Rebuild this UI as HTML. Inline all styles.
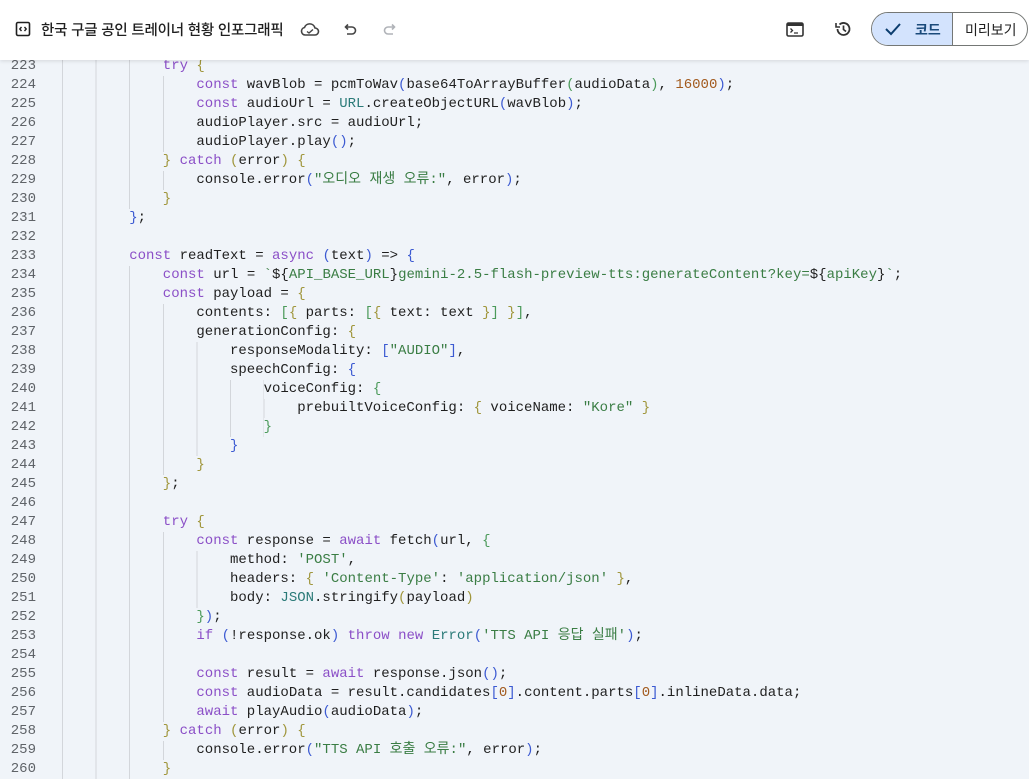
<!DOCTYPE html>
<html><head><meta charset="utf-8"><style>
*{margin:0;padding:0;box-sizing:border-box}
body{width:1029px;height:767px;overflow:hidden;background:#f0f4f9;font-family:"Liberation Sans","Noto Sans CJK KR",sans-serif;position:relative}
.hdr{position:absolute;left:0;top:0;width:1029px;height:60px;background:#fff;box-shadow:0 1px 4px rgba(0,0,0,.12);z-index:5}
.title{position:absolute;left:41px;top:19px;font-size:14.5px;color:#1f1f1f;font-weight:500;letter-spacing:-.2px}
.code{position:absolute;left:0;top:57px;width:1029px;font-family:"Liberation Mono","Noto Sans CJK KR",monospace;font-size:14px;color:#1f1f1f}
.l{height:19px;line-height:19px;position:relative;white-space:pre}
.n{position:absolute;left:0;width:36px;text-align:right;color:#5f6368}
.g{position:absolute;left:62px;top:0;height:19px;width:calc(var(--i)*33.6px);background:repeating-linear-gradient(90deg,#d3d6db 0,#d3d6db 1px,transparent 1px,transparent 33.6px)}
.t{position:absolute;top:0;left:calc(62px + var(--i)*33.6px)}
.k{color:#8b4fc7}.s{color:#3a7d44}.c{color:#2a7a78}.m{color:#a25a1e}
.y{color:#a0963c}.b{color:#3c5ad2}.gr{color:#4b9a5a}
</style></head><body>
<div class="hdr">
<svg style="position:absolute;left:15px;top:21px" width="16" height="16" viewBox="0 0 16 16"><rect x="1.5" y="1.5" width="13" height="13" rx="1.5" fill="none" stroke="#1f1f1f" stroke-width="1.6"/><path d="M6.5 6 L4.8 8 L6.5 10 M9.5 6 L11.2 8 L9.5 10" fill="none" stroke="#1f1f1f" stroke-width="1.4"/></svg>
<div class="title">한국 구글 공인 트레이너 현황 인포그래픽</div>
<svg style="position:absolute;left:300px;top:20px" width="20" height="18" viewBox="0 0 20 18"><path d="M5 15 H15 A3.5 3.5 0 0 0 15 8 A5.5 5.5 0 0 0 4.5 7.5 A3.8 3.8 0 0 0 5 15 Z" fill="none" stroke="#444" stroke-width="1.6"/><path d="M7 11.5 L9 13 L13 9.5" fill="none" stroke="#444" stroke-width="1.4"/></svg>
<svg style="position:absolute;left:342px;top:22px" width="16" height="16" viewBox="0 0 16 16"><path d="M4 5 H10 A3.5 3.5 0 0 1 10 12 H5 M6 2.5 L3.5 5 L6 7.5" fill="none" stroke="#444" stroke-width="1.6"/></svg>
<svg style="position:absolute;left:382px;top:22px" width="16" height="16" viewBox="0 0 16 16"><path d="M12 5 H6 A3.5 3.5 0 0 0 6 12 H11 M10 2.5 L12.5 5 L10 7.5" fill="none" stroke="#b0b3b8" stroke-width="1.6"/></svg>
<svg style="position:absolute;left:786px;top:22px" width="18" height="15" viewBox="0 0 18 15"><rect x="1" y="1" width="16" height="13" rx="1.5" fill="none" stroke="#333" stroke-width="1.6"/><rect x="1" y="1" width="16" height="3" fill="#333"/><path d="M4.5 6.5 L6.5 8.5 L4.5 10.5 M8 11 H12" fill="none" stroke="#333" stroke-width="1.3"/></svg>
<svg style="position:absolute;left:834px;top:20px" width="18" height="18" viewBox="0 0 18 18"><path d="M3.5 9 A6 6 0 1 0 5.5 4.5" fill="none" stroke="#333" stroke-width="1.8"/><path d="M2 3 V7 H6" fill="none" stroke="#333" stroke-width="1.6"/><path d="M9.5 5.5 V9.5 L12 11.5" fill="none" stroke="#333" stroke-width="1.7"/></svg>
<div style="position:absolute;left:871px;top:12px;width:157px;height:34px;border:1px solid #747775;border-radius:17px;overflow:hidden">
<div style="position:absolute;left:0;top:0;width:81px;height:32px;background:#d3e3fd;border-right:1px solid #747775"></div>
<svg style="position:absolute;left:12px;top:9px" width="18" height="14" viewBox="0 0 18 14"><path d="M2 7 L7 12 L16 2" fill="none" stroke="#0b3d6e" stroke-width="2"/></svg>
<div style="position:absolute;left:43px;top:7px;font-size:14px;font-weight:bold;color:#1a4a7a">코드</div>
<div style="position:absolute;left:93px;top:7px;font-size:14px;color:#1f1f1f">미리보기</div>
</div>
</div>
<div class="code">
<div class="l"><span class="n">223</span><span class="g" style="--i:3"></span><span class="t" style="--i:3"><span class="k">try</span> <span class="y">{</span></span></div>
<div class="l"><span class="n">224</span><span class="g" style="--i:4"></span><span class="t" style="--i:4"><span class="k">const</span> wavBlob = pcmToWav<span class="b">(</span>base64ToArrayBuffer<span class="gr">(</span>audioData<span class="gr">)</span>, <span class="m">16000</span><span class="b">)</span>;</span></div>
<div class="l"><span class="n">225</span><span class="g" style="--i:4"></span><span class="t" style="--i:4"><span class="k">const</span> audioUrl = <span class="c">URL</span>.createObjectURL<span class="b">(</span>wavBlob<span class="b">)</span>;</span></div>
<div class="l"><span class="n">226</span><span class="g" style="--i:4"></span><span class="t" style="--i:4">audioPlayer.src = audioUrl;</span></div>
<div class="l"><span class="n">227</span><span class="g" style="--i:4"></span><span class="t" style="--i:4">audioPlayer.play<span class="b">()</span>;</span></div>
<div class="l"><span class="n">228</span><span class="g" style="--i:3"></span><span class="t" style="--i:3"><span class="y">}</span> <span class="k">catch</span> <span class="y">(</span>error<span class="y">)</span> <span class="y">{</span></span></div>
<div class="l"><span class="n">229</span><span class="g" style="--i:4"></span><span class="t" style="--i:4">console.error<span class="b">(</span><span class="s">"오디오 재생 오류:"</span>, error<span class="b">)</span>;</span></div>
<div class="l"><span class="n">230</span><span class="g" style="--i:3"></span><span class="t" style="--i:3"><span class="y">}</span></span></div>
<div class="l"><span class="n">231</span><span class="g" style="--i:2"></span><span class="t" style="--i:2"><span class="b">}</span>;</span></div>
<div class="l"><span class="n">232</span><span class="g" style="--i:2"></span></div>
<div class="l"><span class="n">233</span><span class="g" style="--i:2"></span><span class="t" style="--i:2"><span class="k">const</span> readText = <span class="k">async</span> <span class="b">(</span>text<span class="b">)</span> =&gt; <span class="b">{</span></span></div>
<div class="l"><span class="n">234</span><span class="g" style="--i:3"></span><span class="t" style="--i:3"><span class="k">const</span> url = <span class="s">`</span>${<span class="s">API_BASE_URL</span>}<span class="s">gemini-2.5-flash-preview-tts:generateContent?key=</span>${<span class="s">apiKey</span>}<span class="s">`</span>;</span></div>
<div class="l"><span class="n">235</span><span class="g" style="--i:3"></span><span class="t" style="--i:3"><span class="k">const</span> payload = <span class="y">{</span></span></div>
<div class="l"><span class="n">236</span><span class="g" style="--i:4"></span><span class="t" style="--i:4">contents: <span class="gr">[</span><span class="y">{</span> parts: <span class="gr">[</span><span class="y">{</span> text: text <span class="y">}</span><span class="gr">]</span> <span class="y">}</span><span class="gr">]</span>,</span></div>
<div class="l"><span class="n">237</span><span class="g" style="--i:4"></span><span class="t" style="--i:4">generationConfig: <span class="y">{</span></span></div>
<div class="l"><span class="n">238</span><span class="g" style="--i:5"></span><span class="t" style="--i:5">responseModality: <span class="b">[</span><span class="s">"AUDIO"</span><span class="b">]</span>,</span></div>
<div class="l"><span class="n">239</span><span class="g" style="--i:5"></span><span class="t" style="--i:5">speechConfig: <span class="b">{</span></span></div>
<div class="l"><span class="n">240</span><span class="g" style="--i:6"></span><span class="t" style="--i:6">voiceConfig: <span class="gr">{</span></span></div>
<div class="l"><span class="n">241</span><span class="g" style="--i:7"></span><span class="t" style="--i:7">prebuiltVoiceConfig: <span class="y">{</span> voiceName: <span class="s">"Kore"</span> <span class="y">}</span></span></div>
<div class="l"><span class="n">242</span><span class="g" style="--i:6"></span><span class="t" style="--i:6"><span class="gr">}</span></span></div>
<div class="l"><span class="n">243</span><span class="g" style="--i:5"></span><span class="t" style="--i:5"><span class="b">}</span></span></div>
<div class="l"><span class="n">244</span><span class="g" style="--i:4"></span><span class="t" style="--i:4"><span class="y">}</span></span></div>
<div class="l"><span class="n">245</span><span class="g" style="--i:3"></span><span class="t" style="--i:3"><span class="y">}</span>;</span></div>
<div class="l"><span class="n">246</span><span class="g" style="--i:3"></span></div>
<div class="l"><span class="n">247</span><span class="g" style="--i:3"></span><span class="t" style="--i:3"><span class="k">try</span> <span class="y">{</span></span></div>
<div class="l"><span class="n">248</span><span class="g" style="--i:4"></span><span class="t" style="--i:4"><span class="k">const</span> response = <span class="k">await</span> fetch<span class="b">(</span>url, <span class="gr">{</span></span></div>
<div class="l"><span class="n">249</span><span class="g" style="--i:5"></span><span class="t" style="--i:5">method: <span class="s">'POST'</span>,</span></div>
<div class="l"><span class="n">250</span><span class="g" style="--i:5"></span><span class="t" style="--i:5">headers: <span class="y">{</span> <span class="s">'Content-Type'</span>: <span class="s">'application/json'</span> <span class="y">}</span>,</span></div>
<div class="l"><span class="n">251</span><span class="g" style="--i:5"></span><span class="t" style="--i:5">body: <span class="c">JSON</span>.stringify<span class="y">(</span>payload<span class="y">)</span></span></div>
<div class="l"><span class="n">252</span><span class="g" style="--i:4"></span><span class="t" style="--i:4"><span class="gr">}</span><span class="b">)</span>;</span></div>
<div class="l"><span class="n">253</span><span class="g" style="--i:4"></span><span class="t" style="--i:4"><span class="k">if</span> <span class="b">(</span>!response.ok<span class="b">)</span> <span class="k">throw</span> <span class="k">new</span> <span class="c">Error</span><span class="b">(</span><span class="s">'TTS API 응답 실패'</span><span class="b">)</span>;</span></div>
<div class="l"><span class="n">254</span><span class="g" style="--i:4"></span></div>
<div class="l"><span class="n">255</span><span class="g" style="--i:4"></span><span class="t" style="--i:4"><span class="k">const</span> result = <span class="k">await</span> response.json<span class="b">()</span>;</span></div>
<div class="l"><span class="n">256</span><span class="g" style="--i:4"></span><span class="t" style="--i:4"><span class="k">const</span> audioData = result.candidates<span class="b">[</span><span class="m">0</span><span class="b">]</span>.content.parts<span class="b">[</span><span class="m">0</span><span class="b">]</span>.inlineData.data;</span></div>
<div class="l"><span class="n">257</span><span class="g" style="--i:4"></span><span class="t" style="--i:4"><span class="k">await</span> playAudio<span class="b">(</span>audioData<span class="b">)</span>;</span></div>
<div class="l"><span class="n">258</span><span class="g" style="--i:3"></span><span class="t" style="--i:3"><span class="y">}</span> <span class="k">catch</span> <span class="y">(</span>error<span class="y">)</span> <span class="y">{</span></span></div>
<div class="l"><span class="n">259</span><span class="g" style="--i:4"></span><span class="t" style="--i:4">console.error<span class="b">(</span><span class="s">"TTS API 호출 오류:"</span>, error<span class="b">)</span>;</span></div>
<div class="l"><span class="n">260</span><span class="g" style="--i:3"></span><span class="t" style="--i:3"><span class="y">}</span></span></div>
</div>
</body></html>
